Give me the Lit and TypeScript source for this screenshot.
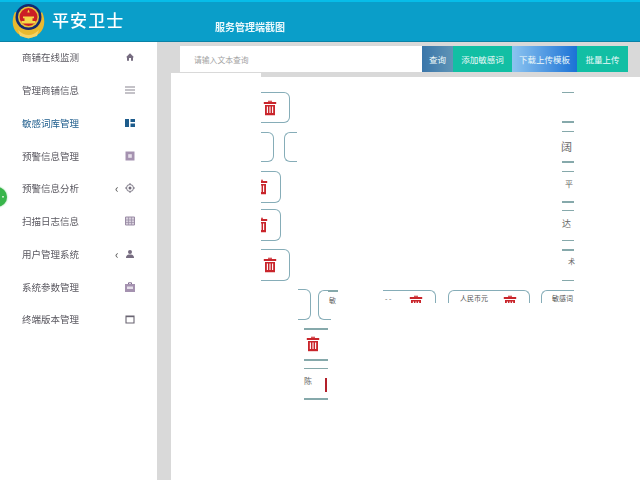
import { LitElement, html, css, svg } from "lit";
import { customElement } from "lit/decorators.js";

const ICONS: Record<string, unknown> = {
  home: svg`<path d="M1 5.2 5 1.2l4 4H8v3.6H6V6H4v2.8H2V5.2z" fill="#766c80"/>`,
  list: svg`<path d="M0 2h10M0 5h10M0 8h10" stroke="#8a8592" stroke-width="1.1"/>`,
  dash: svg`<path d="M0 1h4v8H0zM5.5 1H10v3H5.5zM5.5 5.5H10V9H5.5z" fill="#1d5c8c"/>`,
  box: svg`<path d="M.5.5h9v9h-9z" fill="#a592b0"/><path d="M3.2 3.2h3.6v3.6H3.2z" fill="#e6dfea"/>`,
  target: svg`<circle cx="5" cy="5" r="3.5" fill="none" stroke="#7d7886" stroke-width="1"/><circle cx="5" cy="5" r="1.5" fill="#6f6878"/><path d="M5 0v1.5M5 8.5V10M0 5h1.5M8.5 5H10" stroke="#7d7886"/>`,
  table: svg`<path d="M.5 1h9v8h-9z" fill="#d8cfdd" stroke="#9a8ca5"/><path d="M.5 4h9M.5 6.5h9M3.5 1v8M6.5 1v8" stroke="#9a8ca5" stroke-width=".7"/>`,
  user: svg`<circle cx="5" cy="3" r="2" fill="#766c80"/><path d="M1 9c0-3 1.800-3.600 4-3.600S9 6 9 9z" fill="#766c80"/>`,
  case: svg`<path d="M3.500 .8h3V2.500h-3z" fill="none" stroke="#7f6a8e"/><path d="M0 2h10v8H0z" fill="#a592b0"/><path d="M2 4.500h6v2.500H2z" fill="#e6dfea"/>`,
  cal: svg`<path d="M1 2h8v7H1z" fill="none" stroke="#6a6572" stroke-width="1.100"/><path d="M1 2.600h8" stroke="#6a6572" stroke-width="1.200"/>`,
};

const MENU = [
  { label: "商铺在线监测", icon: "home" },
  { label: "管理商铺信息", icon: "list" },
  { label: "敏感词库管理", icon: "dash", active: true },
  { label: "预警信息管理", icon: "box" },
  { label: "预警信息分析", icon: "target", more: true },
  { label: "扫描日志信息", icon: "table" },
  { label: "用户管理系统", icon: "user", more: true },
  { label: "系统参数管理", icon: "case" },
  { label: "终端版本管理", icon: "cal" },
];

// Page coordinates of the pieces scattered over the white canvas.
const TAGS = [
  { x: 261, y: 92, w: 29, h: 31, cls: "ol", trash: true },
  { x: 261, y: 132, w: 12, h: 30, cls: "ol" },
  { x: 284, y: 132, w: 8, h: 30, cls: "or" },
  { x: 261, y: 171, w: 20, h: 32, cls: "ol", trash: true },
  { x: 261, y: 209, w: 20, h: 32, cls: "ol", trash: true },
  { x: 261, y: 249, w: 29, h: 32, cls: "ol", trash: true },
  { x: 298, y: 289, w: 8, h: 31, cls: "ol" },
  { x: 318, y: 290, w: 10, h: 30, cls: "or" },
  { x: 383, y: 290, w: 53, h: 13, cls: "ol ob cut", text: "- -", trash: true },
  { x: 448, y: 290, w: 82, h: 13, cls: "ob cut", text: "人民币元", trash: true },
  { x: 541, y: 290, w: 33, h: 13, cls: "or ob cut", text: "敏感词" },
];

const LINES = [
  { x: 328, y: 290, w: 10, h: 2 },
  { x: 562, y: 92, w: 12, h: 1.2 },
  { x: 562, y: 121, w: 12, h: 2 },
  { x: 562, y: 131, w: 12, h: 1.2 },
  { x: 562, y: 161, w: 12, h: 2 },
  { x: 562, y: 171, w: 12, h: 1.2 },
  { x: 562, y: 201, w: 12, h: 1.5 },
  { x: 562, y: 210, w: 12, h: 1.2 },
  { x: 562, y: 240, w: 12, h: 1.2 },
  { x: 562, y: 249, w: 12, h: 2 },
  { x: 562, y: 280, w: 12, h: 1.2 },
  { x: 304, y: 328, w: 24, h: 1.5 },
  { x: 304, y: 359, w: 24, h: 1.5 },
  { x: 304, y: 368, w: 24, h: 1.2 },
  { x: 304, y: 398, w: 24, h: 2 },
];

const TEXTS = [
  { x: 329, y: 297, t: "敏", s: 7 },
  { x: 561, y: 140, t: "阔", s: 11 },
  { x: 565, y: 180, t: "平", s: 8 },
  { x: 562, y: 219, t: "达", s: 9 },
  { x: 568, y: 258, t: "术", s: 7 },
  { x: 304, y: 377, t: "陈", s: 8 },
];

const trash = () => html`<svg class="trash" viewBox="0 0 14 16">
  <path d="M5 1.800V.8h4v1zM.8 2h12.400v2H.8z" fill="#c9252b"/>
  <path d="M2 5h10v10.200H2z" fill="#c9252b"/>
  <path d="M4.400 6.500v6.500M7 6.500v6.500M9.600 6.500v6.500" stroke="#fff" stroke-width="1.100"/>
</svg>`;

@customElement("app-root")
export class AppRoot extends LitElement {
  static styles = css`
    :host {
      display: block;
      width: 640px;
      height: 480px;
      overflow: hidden;
      font-family: "Noto Sans CJK SC", "Noto Sans", sans-serif;
      background: #fff;
    }
    .page {
      width: 640px;
      height: 480px;
      display: flex;
      flex-direction: column;
      filter: blur(0.6px);
      position: relative;
    }
    .head {
      height: 42px;
      flex: none;
      box-sizing: border-box;
      background: #0a9ec9;
      border-top: 2px solid #07bde9;
      border-bottom: 1px solid #0a82a6;
      display: flex;
      align-items: center;
      padding-left: 11px;
    }
    .logo { width: 35px; height: 36px; flex: none; margin-top: -2px; }
    .title {
      color: #fff;
      font-size: 17px;
      font-weight: 500;
      letter-spacing: 1.1px;
      margin-left: 6px;
      width: 111px;
      margin-top: -5px;
      white-space: nowrap;
    }
    .sub {
      margin-left: 52px;
      margin-top: 9px;
      color: #eaf8fc;
      font-size: 10px;
      font-weight: 700;
      white-space: nowrap;
    }
    .body { flex: 1; display: flex; min-height: 0; }
    .side { width: 157px; flex: none; display: flex; flex-direction: column; background: #fff; }
    .menu { display: flex; flex-direction: column; margin-top: -1px; }
    .item {
      height: 32.75px;
      flex: none;
      display: flex;
      align-items: center;
      padding-left: 22px;
      color: #5a5860;
      font-size: 9.5px;
      white-space: nowrap;
    }
    .item.active { color: #1d5c8c; }
    .item .label { width: 90px; }
    .more { width: 13px; box-sizing: border-box; padding-left: 3px; color: #555; font-size: 12px; line-height: 1; }
    .ico { width: 10px; height: 10px; margin-left: 13px; flex: none; }
    .more + .ico { margin-left: 0; }
    .main { flex: 1; background: #d9d9d9; display: flex; flex-direction: column; min-width: 0; }
    .bar { height: 31px; flex: none; box-sizing: border-box; display: flex; padding: 4px 12px 0 23px; }
    .search {
      width: 242px;
      height: 26px;
      background: #fff;
      color: #a3a3a3;
      font-size: 7.8px;
      display: flex;
      align-items: center;
      padding-left: 14px;
      box-sizing: border-box;
    }
    .btn {
      height: 26px;
      display: flex;
      align-items: center;
      justify-content: center;
      color: #eefafa;
      font-size: 8.5px;
      white-space: nowrap;
    }
    .b1 { width: 31px; background: linear-gradient(90deg, #3a76aa, #5f94b6); }
    .b2 { width: 59px; background: #12bfa4; }
    .b3 { width: 65px; background: linear-gradient(90deg, #8cc4f0, #1b72d6); }
    .b4 { width: 51px; background: #12bfa4; }
    .panel { flex: 1; margin-left: 14px; background: #fff; position: relative; overflow: hidden; }
    .band { height: 4px; margin-left: 90px; background: #d9d9d9; }
    .tag {
      position: absolute;
      box-sizing: border-box;
      border: 1.8px solid #86adb8;
      border-radius: 6px;
      overflow: hidden;
      display: flex;
      justify-content: flex-end;
      align-items: center;
      padding-right: 12px;
      background: #fff;
    }
    .tag.ol { border-left: none; border-top-left-radius: 0; border-bottom-left-radius: 0; }
    .tag.or { border-right: none; border-top-right-radius: 0; border-bottom-right-radius: 0; }
    .tag.ob { border-bottom: none; border-bottom-left-radius: 0; border-bottom-right-radius: 0; }
    .tag.cut { align-items: flex-start; justify-content: space-between; padding: 4px 12px 0 1px; }
    .tag.cut.or { padding-right: 0; }
    .tag.cut span { color: #555; font-size: 7px; line-height: 7px; padding-left: 10px; white-space: nowrap; }
    .tag.cut.ol span { padding-left: 1px; }
    .tag.cut.or span { padding-left: 9px; }
    .trash { display: block; flex: none; width: 14px; }
    .line { position: absolute; background: #86a9ab; }
    .txt { position: absolute; color: #666; line-height: 1.1; }
    .free { position: absolute; }
    .bar-red { position: absolute; width: 2px; height: 14px; background: #b3202a; }
    .fab {
      position: absolute;
      left: -13px;
      top: 187px;
      width: 20px;
      height: 20px;
      border-radius: 50%;
      background: #38b54a;
      color: #fff;
      font-size: 8px;
      line-height: 19px;
      text-align: right;
      box-shadow: 0 0 2px #7fcf8a;
    }
  `;

  private px(v: number, origin: number) {
    return `${v - origin}px`;
  }

  render() {
    const ox = 171;
    const oy = 73;
    return html`<div class="page">
      <header class="head">
        <svg class="logo" viewBox="0 0 35 36">
          <path d="M4 9C0 17 1 28 9 32c3 2 6 3 8.500 3s6-1 8.500-3c8-4 9-15 5-23l-3 3-18-1z" fill="#e9b92e"/>
          <path d="M7 27c3 3 7 5 10.500 5S25 30 28 27l-2 6-8.500 2.500L9 33z" fill="#f4d266"/>
          <circle cx="17.500" cy="14" r="13" fill="#15296f"/>
          <circle cx="17.500" cy="14" r="10.500" fill="#e8c23a"/>
          <circle cx="17.500" cy="14" r="9" fill="#cc1f25"/>
          <path d="M17.500 6.500l1.200 3H16.300z" fill="#f5d94a"/>
          <path d="M10.500 18h14v2.500h-14zM12 13.500h11v1.800H12zM13.500 15.300h8V18h-8z" fill="#f5d94a"/>
        </svg>
        <div class="title">平安卫士</div>
        <div class="sub">服务管理端截图</div>
      </header>
      <div class="body">
        <nav class="side">
          <div class="menu">
            ${MENU.map(
              (m) => html`<div class="item ${m.active ? "active" : ""}">
                <span class="label">${m.label}</span>
                ${m.more ? html`<span class="more">‹</span>` : ""}
                <svg class="ico" viewBox="0 0 10 10">${ICONS[m.icon]}</svg>
              </div>`
            )}
          </div>
        </nav>
        <main class="main">
          <div class="bar">
            <div class="search">请输入文本查询</div>
            <div class="btn b1">查询</div>
            <div class="btn b2">添加敏感词</div>
            <div class="btn b3">下载上传模板</div>
            <div class="btn b4">批量上传</div>
          </div>
          <section class="panel">
            <div class="band"></div>
            ${TAGS.map(
              (t) => html`<div
                class="tag ${t.cls}"
                style="left:${this.px(t.x, ox)};top:${this.px(t.y, oy)};width:${t.w}px;height:${t.h}px"
              >
                ${t.text ? html`<span>${t.text}</span>` : ""} ${t.trash ? trash() : ""}
              </div>`
            )}
            ${LINES.map(
              (l) => html`<div
                class="line"
                style="left:${this.px(l.x, ox)};top:${this.px(l.y, oy)};width:${l.w}px;height:${l.h}px"
              ></div>`
            )}
            ${TEXTS.map(
              (t) => html`<div
                class="txt"
                style="left:${this.px(t.x, ox)};top:${this.px(t.y, oy)};font-size:${t.s}px"
              >${t.t}</div>`
            )}
            <div class="free" style="left:${this.px(306, ox)};top:${this.px(336, oy)}">${trash()}</div>
            <div class="bar-red" style="left:${this.px(325, ox)};top:${this.px(378, oy)}"></div>
          </section>
        </main>
      </div>
      <div class="fab">··</div>
    </div>`;
  }
}
